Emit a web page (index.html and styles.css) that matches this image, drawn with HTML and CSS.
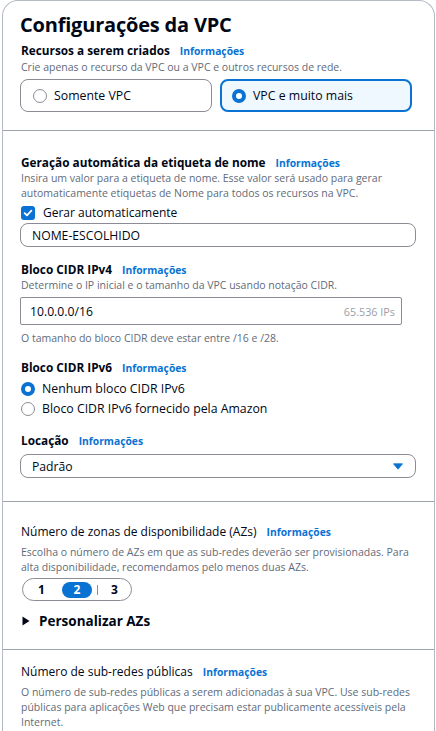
FILE: index.html
```html
<!DOCTYPE html>
<html lang="pt-BR">
<head>
<meta charset="utf-8">
<title>Configurações da VPC</title>
<link rel="stylesheet" href="styles.css">
</head>
<body>
<div class="card">
  <section class="sec sec1">
    <h2 class="title">Configurações da VPC</h2>
    <div class="label l-res"><span class="lbl">Recursos a serem criados</span><a class="info">Informações</a></div>
    <p class="desc d-res">Crie apenas o recurso da VPC ou a VPC e outros recursos de rede.</p>
    <div class="tiles">
      <div class="tile"><span class="radio"></span><span>Somente VPC</span></div>
      <div class="tile sel"><span class="radio on"></span><span>VPC e muito mais</span></div>
    </div>
  </section>

  <section class="sec sec2">
    <div class="label"><span class="lbl">Geração automática da etiqueta de nome</span><a class="info">Informações</a></div>
    <p class="desc">Insira um valor para a etiqueta de nome. Esse valor será usado para gerar automaticamente etiquetas de Nome para todos os recursos na VPC.</p>
    <div class="check-row">
      <span class="checkbox"><svg width="10" height="10" viewBox="0 0 10 10"><path d="M1.6 5.2 L4 7.4 L8.4 2.6" fill="none" stroke="#fff" stroke-width="1.8" stroke-linecap="round" stroke-linejoin="round"/></svg></span>
      <span>Gerar automaticamente</span>
    </div>
    <div class="input round">NOME-ESCOLHIDO</div>

    <div class="label l-ipv4"><span class="lbl">Bloco CIDR IPv4</span><a class="info">Informações</a></div>
    <p class="desc">Determine o IP inicial e o tamanho da VPC usando notação CIDR.</p>
    <div class="input square"><span>10.0.0.0/16</span><span class="ips">65.536 IPs</span></div>
    <p class="desc helper">O tamanho do bloco CIDR deve estar entre /16 e /28.</p>

    <div class="label l-ipv6"><span class="lbl">Bloco CIDR IPv6</span><a class="info">Informações</a></div>
    <div class="radio-row first"><span class="radio on"></span><span>Nenhum bloco CIDR IPv6</span></div>
    <div class="radio-row"><span class="radio"></span><span>Bloco CIDR IPv6 fornecido pela Amazon</span></div>

    <div class="label l-loc"><span class="lbl">Locação</span><a class="info">Informações</a></div>
    <div class="input round select"><span>Padrão</span><svg class="caret" width="10" height="7" viewBox="0 0 10 7"><path d="M0.5 0.8 H9.5 L5 6.2 Z" fill="#0972d3" stroke="#0972d3" stroke-width="0.8" stroke-linejoin="round"/></svg></div>
  </section>

  <section class="sec sec3">
    <div class="label"><span class="lbl normal">Número de zonas de disponibilidade (AZs)</span><a class="info">Informações</a></div>
    <p class="desc d-az">Escolha o número de AZs em que as sub-redes deverão ser provisionadas. Para alta disponibilidade, recomendamos pelo menos duas AZs.</p>
    <div class="segment">
      <span class="seg">1</span>
      <span class="seg on">2</span>
      <span class="seg-sep"></span>
      <span class="seg">3</span>
    </div>
    <div class="expand"><svg width="8" height="10" viewBox="0 0 8 10"><path d="M0.5 0.5 L7.5 5 L0.5 9.5 Z" fill="#000716"/></svg><span>Personalizar AZs</span></div>
  </section>

  <section class="sec sec4">
    <div class="label"><span class="lbl normal">Número de sub-redes públicas</span><a class="info">Informações</a></div>
    <p class="desc d-pub">O número de sub-redes públicas a serem adicionadas à sua VPC. Use sub-redes públicas para aplicações Web que precisam estar publicamente acessíveis pela Internet.</p>
  </section>
</div>
</body>
</html>
```

FILE: styles.css
```css
* { box-sizing: border-box; }
html, body { margin: 0; padding: 0; background: #ffffff; }
body {
  font-family: "Open Sans", "Noto Sans", Arial, sans-serif;
  color: #000716;
  font-size: 12.3px;
  overflow: hidden;
}
.card {
  margin: 0 1px 0 2px;
  border: 1px solid #b4bac4;
  border-bottom: none;
  border-radius: 16px 16px 0 0;
  background: #fff;
}
.sec {
  display: flex;
  flex-direction: column;
  align-items: flex-start;
  padding: 0 17px 0 17px;
  border-bottom: 1px solid #9ba3ad;
}
.sec:last-child { border-bottom: none; }
.sec1 { padding-top: 12px; padding-bottom: 18px; }
.sec2 { padding-top: 23px; padding-bottom: 23px; }
.sec3 { padding-top: 22px; padding-bottom: 19px; }
.sec4 { padding-top: 14px; padding-bottom: 10px; }

.title {
  margin: 0;
  font-size: 20px;
  line-height: 24px;
  font-weight: 700;
  letter-spacing: -0.2px;
}
.label {
  display: flex;
  align-items: baseline;
  gap: 10px;
  line-height: 16px;
  padding-left: 1px;
}
.l-res { margin-top: 5px; }
.lbl { font-size: 11.8px; font-weight: 700; }
.lbl.normal { font-size: 12px; font-weight: 400; }
.info {
  font-size: 10.3px;
  font-weight: 700;
  color: #0972d3;
}
.desc {
  margin: 0;
  font-size: 10.5px;
  line-height: 15px;
  color: #5f6b7a;
  padding-left: 1px;
}
.d-res { margin-top: 1px; }
.d-az { line-height: 14.5px; margin-top: 5px; }
.d-pub { line-height: 15px; margin-top: 5px; }

.tiles {
  display: flex;
  gap: 8px;
  margin-top: 4px;
}
.tile {
  width: 192px;
  height: 33px;
  display: flex;
  align-items: center;
  gap: 7px;
  padding-left: 12px;
  border: 1px solid #8c8c94;
  border-radius: 8px;
  font-size: 12.3px;
}
.tile.sel {
  border: 2px solid #0972d3;
  background: #f0f8ff;
  padding-left: 10px;
}
.radio {
  width: 14px;
  height: 14px;
  border-radius: 50%;
  border: 1px solid #8c8c94;
  background: #fff;
  flex: none;
}
.radio.on { border: 4px solid #0972d3; }

.check-row {
  display: flex;
  align-items: center;
  gap: 8px;
  margin-top: 3px;
  line-height: 18px;
  font-size: 12px;
  padding-left: 1px;
}
.checkbox {
  width: 14px;
  height: 14px;
  border-radius: 3px;
  background: #0972d3;
  display: flex;
  align-items: center;
  justify-content: center;
}
.input {
  display: flex;
  align-items: center;
  width: 396px;
  height: 24px;
  border: 1px solid #8c8c94;
  padding: 0 11px;
  font-size: 12.2px;
  margin-top: 1px;
}
.input.round { border-radius: 8px; }
.input.square {
  border-radius: 2px;
  width: 382px;
  height: 28px;
  justify-content: space-between;
  padding: 0 6px 0 9px;
  margin-top: 4px;
}
.ips { font-size: 10.8px; color: #9ba0a8; }
.helper { margin-top: 6px; }
.l-ipv4 { margin-top: 14px; }
.l-ipv6 { margin-top: 13px; }
.radio-row {
  display: flex;
  align-items: center;
  gap: 7px;
  line-height: 20px;
  font-size: 12.3px;
  padding-left: 1px;
}
.radio-row.first { margin-top: 3px; }
.l-loc { margin-top: 13px; }
.select {
  justify-content: space-between;
  margin-top: 5px;
  padding-right: 12px;
}
.segment {
  display: flex;
  align-items: center;
  margin-top: 4px;
  margin-left: 2px;
  width: 110px;
  height: 23px;
  border: 1px solid #8c8c94;
  border-radius: 12px;
  padding: 0 3px 0 15px;
  font-size: 12px;
  font-weight: 700;
}
.seg { line-height: 16px; }
.seg:first-child { margin-right: 17px; }
.seg.on {
  background: #0972d3;
  color: #fff;
  width: 30px;
  text-align: center;
  border-radius: 8px;
}
.seg-sep {
  width: 1px;
  height: 10px;
  background: #8c8c94;
  margin: 0 13px 0 5px;
}
.expand {
  display: flex;
  align-items: center;
  gap: 9px;
  margin-top: 11px;
  margin-left: 2px;
  font-size: 13.5px;
  font-weight: 700;
  line-height: 18px;
}
```
